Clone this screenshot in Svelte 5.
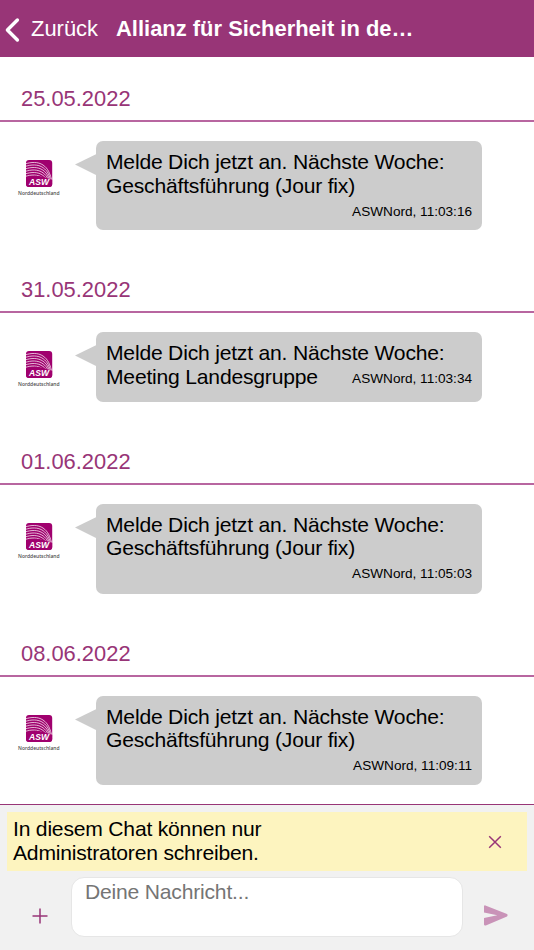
<script>
  const messages = [
    { date: '25.05.2022', text: 'Geschäftsführung (Jour fix)', time: '11:03:16', height: 190.8, bubble: 89 },
    { date: '31.05.2022', text: 'Meeting Landesgruppe', time: '11:03:34', height: 171.8, bubble: 70, inline: true },
    { date: '01.06.2022', text: 'Geschäftsführung (Jour fix)', time: '11:05:03', height: 192.1, bubble: 90.4 },
    { date: '08.06.2022', text: 'Geschäftsführung (Jour fix)', time: '11:09:11', height: 192, bubble: 89 }
  ];
  const waves = [0, 1, 2, 3, 4, 5];
</script>

<div class="app">
  <header>
    <button class="back" aria-label="Zurück">
      <svg width="16" height="26" viewBox="0 0 16 26"><path d="M13.4 3 L3.4 13 L13.4 23" fill="none" stroke="#fff" stroke-width="3.4" stroke-linecap="round" stroke-linejoin="round" /></svg>
      <span>Zurück</span>
    </button>
    <h1>Allianz für Sicherheit in de…</h1>
  </header>

  <main>
    {#each messages as m}
      <section style="height:{m.height}px">
        <h2>{m.date}</h2>
        <div class="row">
          <svg class="logo" width="44" height="40" viewBox="0 0 44 40">
            <defs>
              <clipPath id="tile-{m.date}"><rect x="9" y="0" width="26.2" height="27" rx="3" /></clipPath>
            </defs>
            <g clip-path="url(#tile-{m.date})">
              <rect x="9" y="0" width="27" height="27" fill="#a0006e" />
              {#each waves as w}
                <path
                  d="M8 {4 + w * 2.5} C14 {2 + w * 2.5} 21 {1.6 + w * 2.5} 26 {5 + w * 2.6} S{33 - w * 0.6} {13 + w * 2.4} {35.5 - w * 1.2} 23"
                  fill="none" stroke="#fff" stroke-width="0.85" stroke-opacity="0.85" />
              {/each}
              <path d="M8 17.5 Q18 14.5 25 16.5 T36 20 V28 H8Z" fill="#a0006e" />
            </g>
            <text x="12" y="24.8" textLength="20" lengthAdjust="spacingAndGlyphs" class="asw">ASW</text>
            <text x="1" y="35.4" textLength="41.5" lengthAdjust="spacingAndGlyphs" class="region">Norddeutschland</text>
          </svg>
          <svg class="tail" width="22" height="24" viewBox="0 0 22 24"><path d="M0 11.6 L22 0.8 V22.6Z" fill="#ccc" /></svg>
          <div class="bubble" class:inline={m.inline} style="height:{m.bubble}px">
            <p>Melde Dich jetzt an. Nächste Woche:<br />{m.text}</p>
            <span class="meta">ASWNord, {m.time}</span>
          </div>
        </div>
      </section>
    {/each}
  </main>

  <footer>
    <div class="notice">
      <p>In diesem Chat können nur<br />Administratoren schreiben.</p>
      <button aria-label="Schließen">
        <svg width="14" height="14" viewBox="0 0 14 14"><path d="M1.2 1.2 L12.8 12.8 M12.8 1.2 L1.2 12.8" stroke="#983577" stroke-width="1.5" /></svg>
      </button>
    </div>
    <div class="compose">
      <button class="plus" aria-label="Anhang hinzufügen">
        <svg width="16" height="16" viewBox="0 0 16 16"><path d="M8 0.5 V15.5 M0.5 8 H15.5" stroke="#983577" stroke-width="1.5" /></svg>
      </button>
      <textarea placeholder="Deine Nachricht..."></textarea>
      <button class="send" aria-label="Senden">
        <svg width="24" height="21" viewBox="0 0 24 21"><path d="M1.4 0.4 L23 9 Q24.2 10.2 23 11.4 L1.8 20.5 Q0 20.8 0 19.5 V13.1 L13.3 10.2 L0 7.6 V1.2 Q0.1 0.2 1.4 0.4Z" fill="#c993b8" /></svg>
      </button>
    </div>
  </footer>
</div>

<style>
  .app {
    width: 534px;
    height: 950px;
    display: flex;
    flex-direction: column;
    overflow: hidden;
    background: #fff;
    color: #000;
    font-family: "Liberation Sans", Arial, sans-serif;
    font-size: 21.1px;
    letter-spacing: -0.2px;
    line-height: 23.4px;
  }
  * { box-sizing: border-box; }
  h1, h2, p { margin: 0; font-size: inherit; }
  button { border: 0; padding: 0; background: none; font: inherit; letter-spacing: inherit; color: inherit; display: flex; }
  header {
    height: 57px;
    flex: none;
    display: flex;
    align-items: center;
    background: #983577;
    color: #fff;
    font-size: 21.95px;
    letter-spacing: 0;
    padding-left: 4px;
  }
  .back { align-items: center; width: 112px; gap: 11px; }
  .back svg { flex: none; position: relative; top: 1px; }
  h1 { font-weight: 700; white-space: nowrap; }
  main { flex: 1; min-height: 0; overflow: hidden; }
  h2 {
    height: 65px;
    padding: 30px 0 0 21px;
    border-bottom: 2px solid #b866a0;
    color: #983577;
    font-size: 21.9px;
    font-weight: 400;
    letter-spacing: 0;
  }
  .row { display: flex; align-items: flex-start; padding: 19px 0 0 17px; }
  .logo { margin-top: 19px; flex: none; letter-spacing: 0; }
  .asw { font: italic 700 9.5px "Liberation Sans", Arial, sans-serif; fill: #fff; }
  .region { font: 500 4.8px "Noto Sans", sans-serif; fill: #444; }
  .tail { margin: 12px -1px 0 14px; flex: none; }
  .bubble {
    width: 386px;
    display: flex;
    flex-direction: column;
    padding: 9.3px 10px 0;
    border-radius: 7px;
    background: #ccc;
    white-space: nowrap;
  }
  .meta { align-self: flex-end; margin-top: 6.5px; font-size: 13.6px; letter-spacing: 0; line-height: 16px; }
  .inline .meta { margin-top: -17.3px; }
  footer {
    height: 146px;
    flex: none;
    border-top: 1px solid #983577;
    background: #f1f1f1;
    padding: 7px 7px 0 7px;
  }
  .notice {
    height: 59px;
    display: flex;
    justify-content: space-between;
    align-items: center;
    padding: 0 25px 0 6px;
    background: #fdf4bf;
  }
  .notice p { padding-bottom: 2px; }
  .compose { display: flex; align-items: flex-start; padding-top: 6px; }
  .plus { margin: 31px 23px 0 25px; }
  textarea {
    width: 392px;
    height: 60px;
    resize: none;
    border: 1.5px solid #e6e6e6;
    border-radius: 13px;
    background: #fff;
    padding: 2px 13px;
    font: inherit;
    letter-spacing: inherit;
    outline: 0;
    overflow: hidden;
  }
  textarea::placeholder { color: #757575; opacity: 1; }
  .send { margin: 28px 0 0 21px; }
</style>
